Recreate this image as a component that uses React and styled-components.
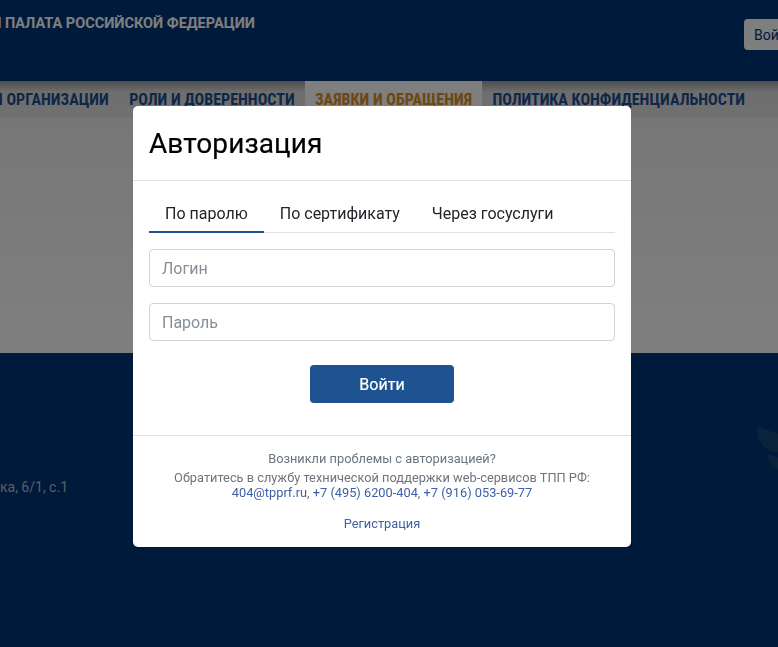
import React from 'react'
import styled, { createGlobalStyle } from 'styled-components'

const GlobalStyle = createGlobalStyle`
  html, body {
    margin: 0;
    height: 100%;
    overflow: hidden;
    background: #003476;
    font-family: Roboto, "Liberation Sans", sans-serif;
  }
  * { box-sizing: border-box; }
`

const Page = styled.div`
  width: 778px;
  height: 647px;
  display: flex;
  flex-direction: column;
  overflow: hidden;
`

const Header = styled.header`
  height: 81px;
  flex: none;
  display: flex;
  align-items: flex-start;
  background: #003476;
  overflow: hidden;
`

const OrgName = styled.div`
  width: 255px;
  flex: none;
  display: flex;
  justify-content: flex-end;
  padding-top: 15px;
  font-size: 14.5px;
  line-height: 17px;
  font-weight: 700;
  color: #fff;
  white-space: nowrap;
  overflow: hidden;
`

const LoginButton = styled.button`
  flex: none;
  margin: 19px 0 0 489px;
  width: 70px;
  height: 31px;
  padding: 0 0 0 10px;
  text-align: left;
  border: 0;
  border-radius: 4px;
  background: #fff;
  color: #003476;
  font: 400 14px Roboto, sans-serif;
`

const Nav = styled.nav`
  height: 37px;
  flex: none;
  display: flex;
  justify-content: flex-end;
  padding-right: 22.8px;
  background: linear-gradient(#9c9c9c 0, #dcdcdc 11px, #e2e2e2 100%);
  overflow: hidden;
`

const NavItem = styled.div`
  flex: none;
  padding: 9px 10.2px 0;
  font-size: 16px;
  line-height: 19px;
  font-weight: 700;
  font-stretch: 75%;
  white-space: nowrap;
  color: ${({ $active }) => ($active ? '#d98f1c' : '#1f4f8f')};
  background: ${({ $active }) => ($active ? '#fff' : 'transparent')};
`

const Main = styled.main`
  height: 235px;
  flex: none;
  background: linear-gradient(#eeeeee, #ffffff);
`

const Footer = styled.footer`
  flex: 1;
  display: flex;
  justify-content: space-between;
  background: #003476;
  overflow: hidden;
`

const Address = styled.div`
  width: 68px;
  flex: none;
  display: flex;
  justify-content: flex-end;
  margin-top: 126px;
  font-size: 14px;
  line-height: 17px;
  color: #b4bcc8;
  white-space: nowrap;
  overflow: hidden;
`

const FooterLogo = styled.svg`
  flex: none;
  width: 21px;
  height: 42px;
  margin-top: 74px;
`

const Overlay = styled.div`
  position: fixed;
  inset: 0;
  background: rgba(0, 0, 0, 0.5);
`

const Modal = styled.div`
  position: fixed;
  left: 133px;
  top: 106px;
  width: 498px;
  height: 441px;
  display: flex;
  flex-direction: column;
  background: #fff;
  border-radius: 5px;
  overflow: hidden;
`

const ModalHeader = styled.div`
  height: 75px;
  flex: none;
  padding: 21px 16px 0;
  border-bottom: 1px solid #dee2e6;
`

const Title = styled.h2`
  margin: 0;
  font-size: 28px;
  line-height: 34px;
  font-weight: 400;
  letter-spacing: 0.1px;
  -webkit-text-stroke: 0.2px #000;
  color: #000;
`

const ModalBody = styled.div`
  height: 255px;
  flex: none;
  padding: 16px 16px 0;
  border-bottom: 1px solid #dee2e6;
`

const Tabs = styled.div`
  display: flex;
  height: 36px;
  border-bottom: 1px solid #dee2e6;
`

const Tab = styled.div`
  height: 36px;
  padding: 7px 16px 0;
  font-size: 16px;
  line-height: 19px;
  color: #212529;
  border-bottom: 2px solid ${({ $active }) => ($active ? '#1f5290' : 'transparent')};
`

const Field = styled.input`
  display: block;
  width: 100%;
  height: 38px;
  margin-top: 16px;
  padding: 0 12px;
  border: 1px solid #ced4da;
  border-radius: 4px;
  font: 400 16px Roboto, sans-serif;
  outline: none;

  &::placeholder {
    color: #868e96;
    opacity: 1;
  }
`

const Submit = styled.button`
  display: block;
  width: 144px;
  height: 38px;
  margin: 24px auto 0;
  border: 0;
  border-radius: 4px;
  background: #1f5290;
  color: #fff;
  font: 400 16px Roboto, sans-serif;
  -webkit-text-stroke: 0.2px #fff;
`

const ModalFooter = styled.div`
  flex: 1;
  padding-top: 15px;
  text-align: center;
  font-size: 12.8px;
  line-height: 15px;
  color: #6c757d;
`

const HelpTitle = styled.div`
  margin-bottom: 4px;
`

const Link = styled.a`
  color: #3f5fa8;
  text-decoration: none;
`

const Register = styled.div`
  margin-top: 16px;
`

export default function App() {
  return (
    <>
      <GlobalStyle />
      <Page>
        <Header>
          <OrgName>ТОРГОВО-ПРОМЫШЛЕННАЯ ПАЛАТА РОССИЙСКОЙ ФЕДЕРАЦИИ</OrgName>
          <LoginButton>Войти</LoginButton>
        </Header>
        <Nav>
          <NavItem>ПОЛЬЗОВАТЕЛИ И ОРГАНИЗАЦИИ</NavItem>
          <NavItem>РОЛИ И ДОВЕРЕННОСТИ</NavItem>
          <NavItem $active>ЗАЯВКИ И ОБРАЩЕНИЯ</NavItem>
          <NavItem>ПОЛИТИКА КОНФИДЕНЦИАЛЬНОСТИ</NavItem>
        </Nav>
        <Main />
        <Footer>
          <Address>ул. Ильинка, 6/1, с.1</Address>
          <FooterLogo viewBox="0 0 21 42">
            <path d="M1 0 C8 2 15 4 21 7 V25 C9 25 -3 13 1 0Z M11 27 C14 28 18 29 21 31 V42 C15 40 11 34 11 27Z" fill="#164675" />
          </FooterLogo>
        </Footer>
      </Page>
      <Overlay />
      <Modal>
        <ModalHeader>
          <Title>Авторизация</Title>
        </ModalHeader>
        <ModalBody>
          <Tabs>
            <Tab $active>По паролю</Tab>
            <Tab>По сертификату</Tab>
            <Tab>Через госуслуги</Tab>
          </Tabs>
          <Field placeholder="Логин" />
          <Field placeholder="Пароль" />
          <Submit>Войти</Submit>
        </ModalBody>
        <ModalFooter>
          <HelpTitle>Возникли проблемы с авторизацией?</HelpTitle>
          <div>Обратитесь в службу технической поддержки web-сервисов ТПП РФ:</div>
          <div>
            <Link href="#">404@tpprf.ru</Link>, <Link href="#">+7 (495) 6200-404</Link>, <Link href="#">+7 (916) 053-69-77</Link>
          </div>
          <Register>
            <Link href="#">Регистрация</Link>
          </Register>
        </ModalFooter>
      </Modal>
    </>
  )
}
